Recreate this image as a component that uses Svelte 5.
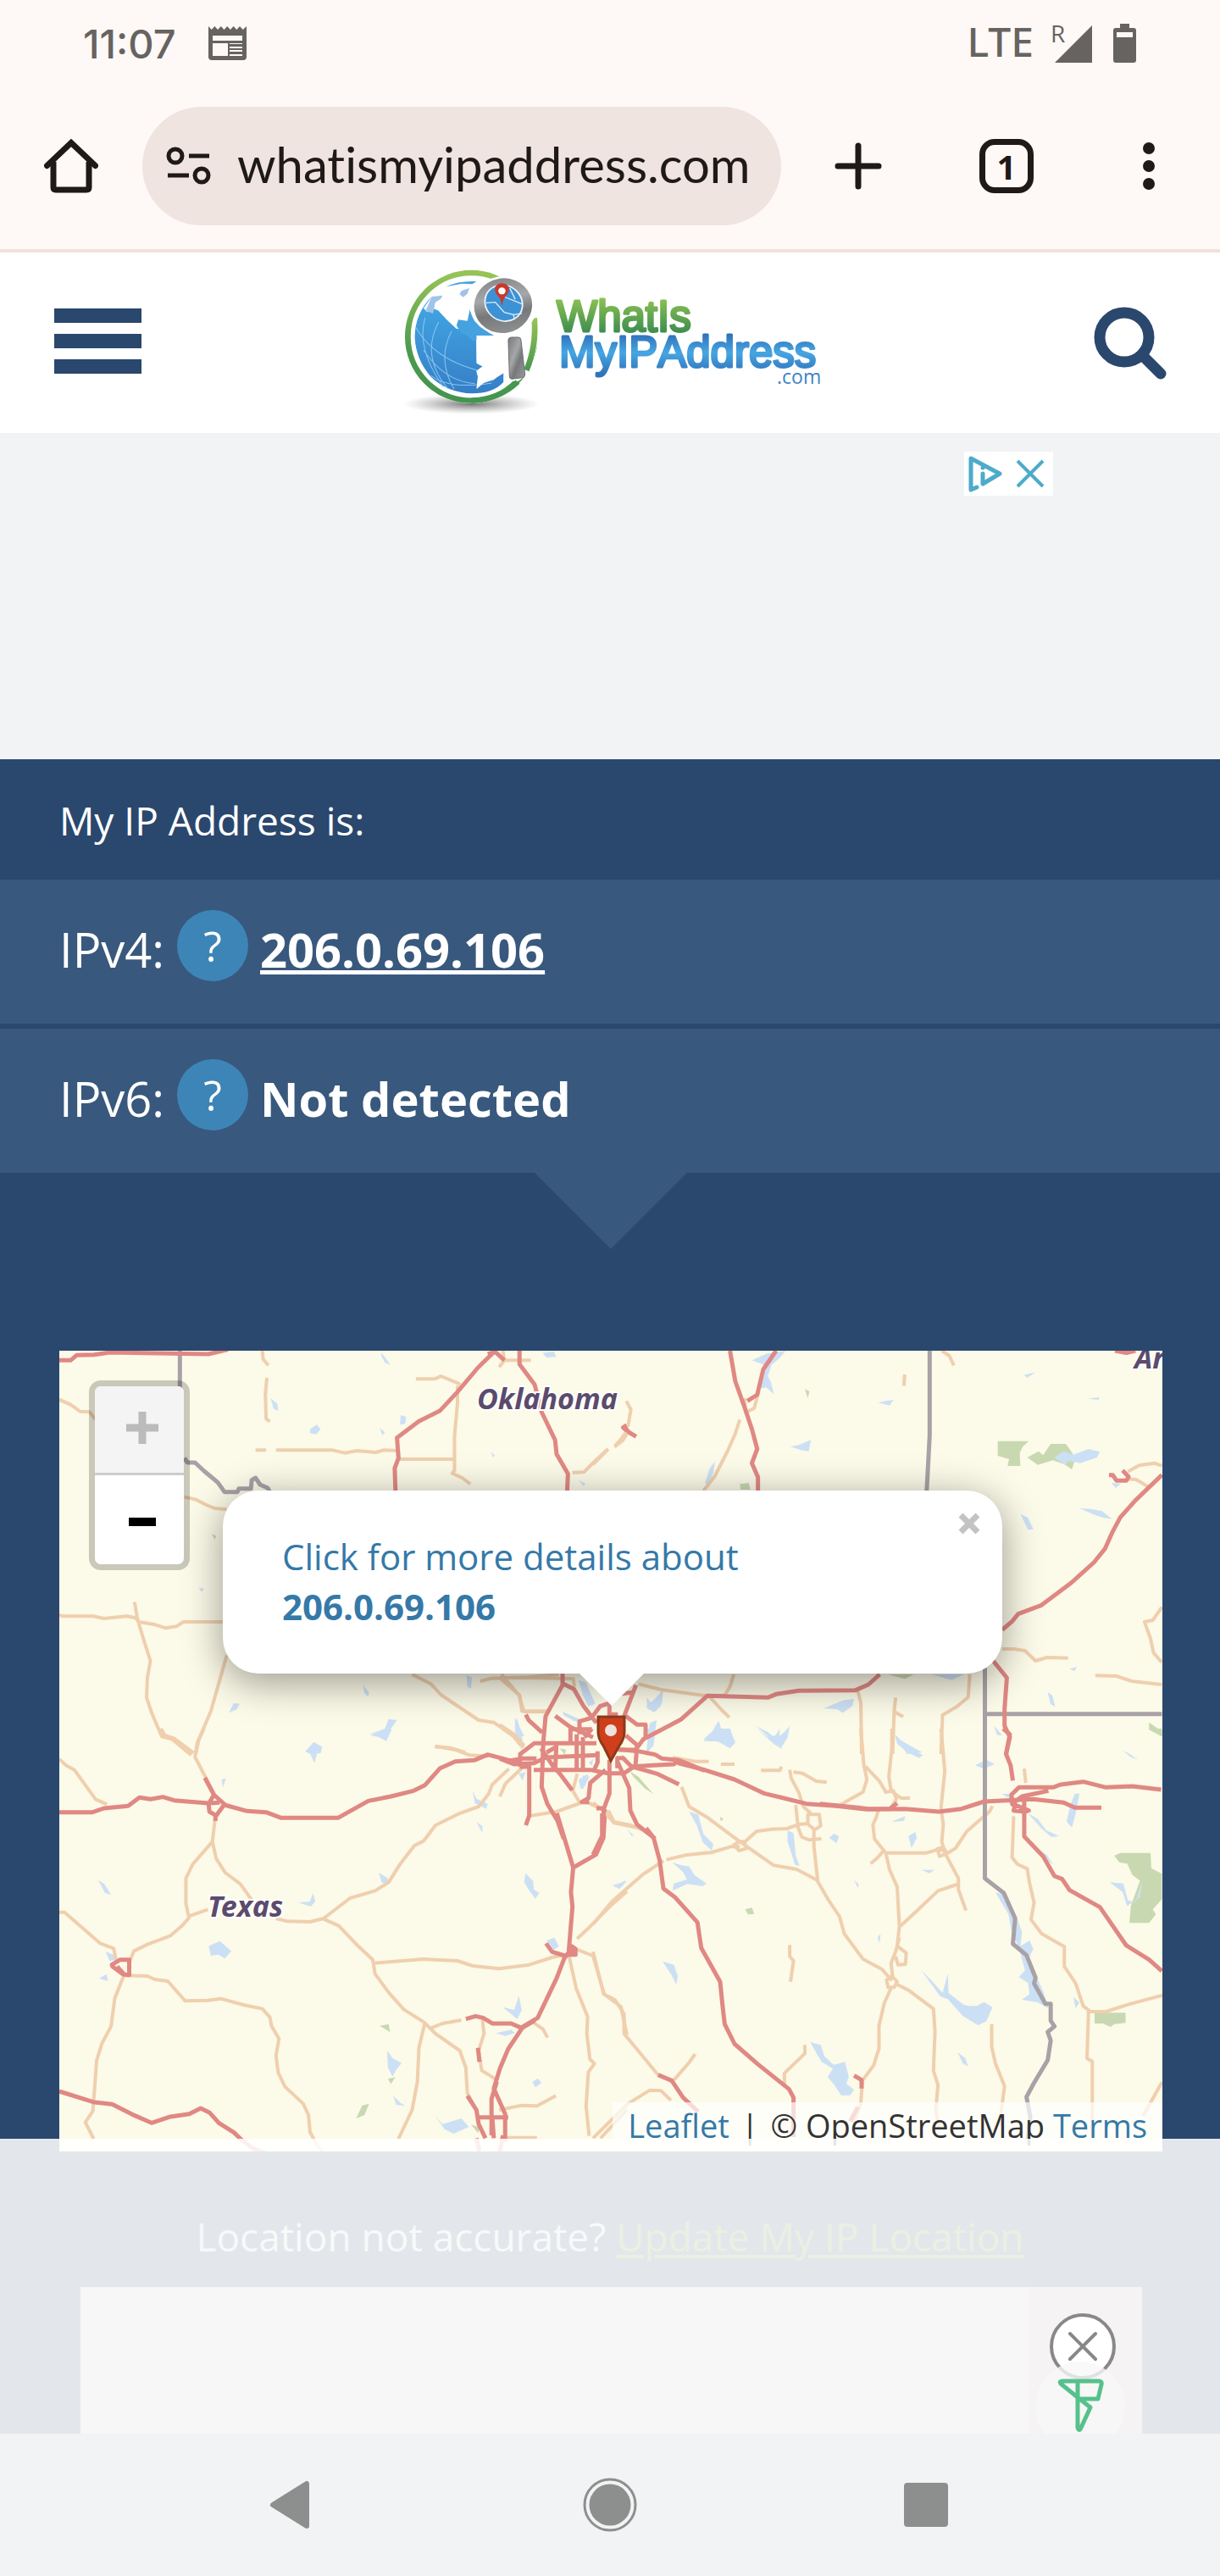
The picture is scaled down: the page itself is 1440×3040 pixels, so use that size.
<script>
  const ip = '206.0.69.106';

  // Map artwork, one entry per area; every area has its own drawing grid.
  const areas = [
    {
      place: 'translate(-30 -24) scale(.44643 .33333)',
      water: ['M918 78l12 20 12 24-14-8-8-20z', 'M626 240l18 20 2 24-12-6z', 'M730 350l18-16 10 16-12 18-16-4z', 'M970 300l14 6-2 24-14 4z', 'M914 346l14 14-6 12z', 'M1440 530l18 12-4 10z', 'M1208 430l10 12-4 8z', 'M1345 80l30-6 6 20-26 2z', 'M1144 1222l14 6-2 40-10-6z', 'M870 1256l16 24-2 18-10-14z', 'M516 1354l12-34 16 2-8 20z', 'M888 1430l40-20 10-34 22 4-18 34-10 32-12-16z', 'M718 1490l22-32 22 16-4 24h-30z', 'M1272 1370l8 20 12 60-8 20-12-50z', 'M1440 1240l20 10 24 70-10 10-22-40z', 'M436 912l14 2-6 12z', 'M1398 1354l36 22-6 8z'],
      green: ['M470 720l12 8-4 12z'],
      tan: ['M67 245l30 18 25 24 25 2 15 25', 'M398 590l28 8 30 20 22 12 32 4', 'M604 72l2 30 14 22M616 168l-4 60 2 85 10 10', 'M586 424h28M640 424h150l32 10 32-8 50 6 20-8 40 2', 'M966 456h146v-80l8-120v-60', 'M1010 172h50l16-10 40 22 12 8', 'M1112 456v40l-6 10 26 16 22 22', 'M1424 504l30-2 30-40 32-40M1535 412l22-22 11-24', 'M1240 72l4 34h70M1244 106l-14 24', 'M67 1008l10 4h80l28 8 60-8 24 6 8 14 44 10 28 12 28-6 18-16h104', 'M266 962l8 60 16 72 18 76-8 60-2 70 14 56 26 82 28 10 50 56', 'M510 1150l-14 66-28 132-32 100-8 52', 'M1000 1218l50 34 26 38 100 90 40 8 50 46 22 36', 'M1180 1242l30-10 98-4 80-10M1236 1218l46 72 14 60h56', 'M1060 1474l40 4 40 16'],
      red: ['M67 106h30l16-18 46-2 42-8 260 6 52-16', 'M1220 72l-46 60-54 86-46 66-56 38-58 58 4 72-10 36 2 80', 'M1284 72v48l40 72 18 96 36 100 4 50 30 70-2 60', 'M1200 84l20-8 24 30', 'M1568 336l-10 8 10 12'],
      border: ['M386 72v138', 'M398 452l8 16h20l24 30 36 40 18 34h34l4-12h32l2-30 10-8 12 24 20 12 6 14'],
    },
    {
      place: 'translate(630 -24) scale(.44643 .33333)',
      water: ['M420 106l40-24 50-10-20 30-18 20-10 40 8 20 8 44-20-24-18 4 2-50 10-34z', 'M522 412l22-6 32-18-6 40-20-4z', 'M754 256l20-6 20-4-10 20z', 'M1140 158l30-10-22 20z', 'M1310 242l30-6-4 10z', 'M1220 450l24-22 26 12 40-20 30 10-8 20-44 20-32-8-8 14z', 'M1286 630l30 2 30 8 26 28-20-4-20-8z', 'M1130 650l20 14 14 40-14 2z', 'M296 540l12-50 14-26-4 40-12 44z', 'M140 1332l24-28 20-30-2 46-22 32z', 'M610 1338l50-28 30-6-4 26-26 24-14-12z', 'M292 1448l24-30 16-36 8 34 20 10 16 28-18 22-30-22z', 'M432 1402l30 20 22 24 20-22 16-22-6 40-18 38-20-26z', 'M896 1218h84l-32 20z', 'M1202 1280l12 12 8 40-12-8z', 'M800 1440l30 24 40 30-40 6z', 'M1060 1400l22 34-14-2z', 'M150 1390l18-10-8 90-20 30z', 'M1370 540l26 2-14 16z', 'M1260 1198l20-6-8 14z'],
      green: ['M1070 392h82l-16 20-8 22 2 46h-34l4-24-30-12z', 'M1148 450l30-22 12 14 20-40h40l16 30 8 26-8 34-20-18-30-14-40 16z', 'M388 544l24-4 4 24h-26z', 'M780 1218h68l-24 16z', 'M560 208l12 8-4 24z', 'M1470 1388l34 32v18l-34-24z'],
      tan: ['M88 250l12 30-8 62M86 362l-10 20-18 28M40 420L0 474', 'M388 316l-12 50-20 60-34 90-30 52', 'M400 240l4 50 22-14 12-60', 'M824 156l-2 40', 'M922 72l20 18 12 34', 'M1414 500l30-22 40-8 20 10M1412 526l24 2 32 26', 'M1082 1128h30l30 6 28 36 30-12 56 2', 'M1328 1222l56 2 40 18 80 12', 'M1504 980l-24 46-22 6 16 60 8 50 22 34', 'M120 1252l60 20 110 20M372 1218l-10 44-14 30-60 0', 'M310 1300l30 44 20 26', 'M700 1276l8 44 2 180', 'M800 1300l-4 50 24 18M796 1350l-4 150', 'M996 1218l-4 80-30 34-38 30-4 138'],
      red: ['M362 72l14 108 24 90 20 80 14 70-14 50 16 50v50', 'M484 72l-34 66-16 90-26 22', 'M80 336l14 24 20 16', 'M1504 512l-70 90-40 60-20 50-20 60-30 50-60 72-80 80-60 30-16 26-26 30', 'M1058 1170l36 60-6 110v60l14 40-10 60', 'M132 1448l100-70 70-84 160 6 22-12 60-12 150-2 34-20 30-36', 'M1364 512h10l10 20h26l6-14-16-22', 'M1380 72l30 8 24-8'],
      border: ['M890 72v300l-8 200', 'M1036 1190v310M1036 1358h468'],
    },
    {
      place: 'translate(-30 446) scale(.44643 .33333)',
      water: ['M718 82l22-34 22 24-12 10-8 40-12-34z', 'M890 24l46-24 10 4-14 40-20-14z', 'M496 180l12-4-8 32z', 'M170 536l16 14 18 38-16-6z', 'M462 770l30-18 30 36-18 26-16-14-20 4z', 'M700 616l30-4 8-30 6 30-12 18z', 'M912 510l22 18 6 20-20-2z', 'M934 1140l14 26 24 18-14 24-10 24-12-32z', 'M1160 220l10 28 30 18-4 18-30-20z', 'M1170 330l16 16v24z', 'M1300 512l20 28 2 30 14 12-10 20-16-28-14-30z', 'M1240 986l30 10 12-50 8 50-12 32z', 'M1222 1078l40-12 10 12-26 10z', 'M1318 1252l14-14 10 16-16 16z', 'M1060 1370l20 30 50-20 20 30-40 24-24-16z', 'M950 1300l20 26 12 10-24-4z', 'M172 884l20-14 4 24z', 'M190 790l20 10 6 20-16 2z', 'M1356 750l20-10 12 30-14 14z', 'M1530 554l38-14-20 28z', 'M1440 180l26-20-8 40-14 4z', 'M1276 0l16 22-10 6z'],
      green: ['M852 1380l16-46 18-6-12 40z', 'M914 1052l24-6 4 28z', 'M1156 1402l24 10-6 20z', 'M936 1240l20-6-12 24z'],
      tan: ['M67 108l18 22 22 16 56 104 30 18', 'M336 0l10 24 24 10 52 52M450 0l-18 50-6 50 50 130', 'M480 310l-8 90-52 80-18 50v90l8 50-20 30-30 34-60 30-36 24-12 40', 'M472 400l10 60 24 50 40 40 32 60', 'M410 664l50-24M640 672l30 10 60 2 36-12 70-72 66-26 36-30 28-60 40-70 24-16 32-56 60-40 54-26 26-44 10-34 44-56', 'M766 674l40 24 50 70 40 50 6 50 36 66 40 60 54 46 30 40 64 60 16 60 4 90 20 50', 'M900 830l130-14 90 6 40 18 70 10 80-14 60-26 30-8', 'M67 650h14l60 70 34 40 36 18 6 40', 'M240 874l60 2 20 12 34 6 46 70 60-2 34-6 60 22 50 14 20 30 4 30 20 46-8 60 6 60 18 50 48 60 14 40 4 60 20 50 20 30', 'M238 874l-24 80-10 100-24 60-14 60-10 180-20 40 22 58', 'M1034 1040l-16 90-4 120-14 100-36 102', 'M1050 1060l30-16 50-12', 'M1186 1030l4 50-14 60 8 70 36 30', 'M1230 1350l60-16 40 2 50-36M1250 1448h80', 'M1240 0l34 32 20 34M1062 62l50 12 40 20 50 4', 'M1568 576l-44 52-56 76-32 40M1424 776l54 28 30 136 44 44 16 100', 'M1414 800l20 120 30 100-2 60 8 90 12 16-16 30-6 120 8 106', 'M1320 1040l26 24 12 30', 'M1568 1350l-70 100'],
      red: ['M67 296h88l30-14 64-8 30-30 30 6 32-8 30 12 90 10 30-2', 'M462 266l14-32 28 34-22 40-18-14zM480 305v22M476 234l-24-60', 'M504 270l60 22 50 4 40 20h150l80-60 60-16 60-20 30-20 40-60 40-24 50-4 36-20 90 32', 'M1142 1028l26-10 20 6 24 20h50l28 16 34-26', 'M1416 790l-14 24-20 70-50 140-38 30-40 80-22 70-16 70 30 90v100', 'M1224 1250l-14 60v130M1174 1376h80M1146 1300l24 50 6 50 18 50M1212 1376l4 74', 'M1174 1130l4 50', 'M67 1284l90 38 50 8 60 40 44 26 50-22 50-10 30-20 24 16 24 36 40 34 20 26 30 30 40 20', 'M206 836l22-18h24v54l-16-2-28-28z', 'M1354 760l16 30 34 14 18-14v-20l10 10v20h-24', 'M1426 490l-6 90 4 50-10 160M1382 296l44 196 60-46 20-60 4-100', 'M240 872l-20-30', 'M1170 1450l8 46M1240 1440l-8 60'],
      border: [],
    },
    {
      place: 'translate(630 446) scale(.44643 .33333)',
      water: ['M254 294l24 10 14 70 26 34-4 24-24-30-16-60z', 'M514 360l16 10 6 80 10 36-12-4-20-84z', 'M210 474l24 10 20 4 14 30 32 30-10 10-40-8-40 24 4-26 34-14-10-26z', 'M184 824l30 12 10 40-4 30-12-32z', 'M432 0l30 30 20-6 12-24-2 40 8 32-20-16z', 'M292 44l26-26 4-18h40l14 50-14 20-28-24z', 'M798 20l30 40 44 34-10 10-30-20-28-30z', 'M1010 130l30-20 22 16-30 16z', 'M868 856l30 40 26 40 14-70 2 70 44 46 30 0 20-14 22 18-16 50-22 14-40-32-40-60-20-10z', 'M574 1110l28 10 10 40 24 30 30-10 10 52-6 26 20 20-10 20h-24l-20-40-16-24 14-30-30-24z', 'M964 1146l20 20 8 30-14-10z', 'M1064 580l30 10 24 70 16 60-4 50 24-20 10 30-14 40 20 50 20 60 14 60-30-22-40-8 20-20-4-40-24-20 16-24-16-80-20-60-8-60z', 'M1274 230h12l-10 70-10 50-14-20 10-60z', 'M1150 300l26 20 22 40 34 20-20 4-26-30z', 'M1180 430l20 18 14 28 10 6-14-6z', 'M1366 544l36 4 12 60 20 6 18-76-6 60-34 30-12-50z', 'M1400 76l22 16 18 18-20-10z', 'M834 380l18-14 4 20-14 36z', 'M868 500h34l-12 12z', 'M788 330l38-20-4 16z', 'M624 386l14-14 12 10-6 24z', 'M56 560l30-24-10 24z', 'M752 740l8-14-2 34z', 'M1270 950l16 20-10 20z', 'M1080 230l30 2-8 16z', 'M140 0h20l-6 60z', 'M690 536l12 14-2 14z'],
      green: ['M1378 450l16-10h80l2 54 28 20v90l-24 36 8 18-18 30h-52l4-60 24-90-20-20-14-40-20-4z', 'M1326 1006h82v36l-30 4-10 10-20-12h-22z', 'M402 640l18-6 6 22-16 2z', 'M1468 0h36v28z', 'M96 150l24 20 38 60-26-30z', 'M974 976l30 10 10 40-20-10z'],
      tan: ['M234 206l20 70 50 40 84 84 90 84 60 14 54 38 30 70 30 60 12 60 50 90 50 36 26 40', 'M194 464l50-16 70-10 50-20h24M388 400h12l6 24-20 8-14-20zM402 400l30-36 40-8 40-2 30-14 24-4', 'M520 146l4 30 20 50 12 50 20 24M568 304h30l4 40-16 14-18-20zM584 358v60l10 120', 'M536 270l6 80 10 34 20 10 32-4', 'M530 154l24 4 36 28 28 4M444 148h50l4-14M338 126h36M210 102l60 14h36', 'M708 0l8 130 8 50-10 44-40 30-30 24M720 134l36 50 18 40', 'M790 0v70l-8 100 6 50M770 226l24-6 8 30-14 30M788 220l26 26h24', 'M920 0l10 150-10 130 6 60-4 60 8 40', 'M756 280l-6 30-10 30 4 50 30 50 10 60 20 60 6 140-6 70 24 24-2 40-20 2-6-30', 'M772 440h110l24-10h24M910 426l16-6 10 22-20 10z', 'M770 430l-20 30-16 18M930 440l36 90v40l20 74M938 440l20-16 30-60 60-70 8-20M812 700l40-50 60-76 50-22', 'M810 740l-10 50-12 40 4 50M776 890l14-14 14 20-8 20h-16zM790 912l-20 60-14 80v80l-14 60-30 54-4 80-20 70', 'M804 906l30 20 66 66 4 80-4 140 12 50-6 90 8 60', 'M0 692l50-80 80-94 56-50', 'M0 790l28 150 30 20 24 50v70l90 146', 'M270 1152l-16 30-40 62M0 1450l90-120 60-50 30 2 26 34', 'M560 1120v30l-54 70v40', 'M520 766v40l10 16-8 74', 'M1140 142l4 50M1112 310l-4 146 14 24 26 16 6 50 12 70-8 60 28 50 60 46v70l30 60 20 80 20 20h40l60-26 90-32', 'M1310 998l-4 170 14 10v274', 'M1054 1046v80l10 60 24 80-14 140', 'M1504 1252l-50 120M0 262l26 28 30 44 60 16'],
      red: ['M224 122l70 24 80 34 80 50 50 16 60 20 80 8 80 12 100-2 90 10 60-10 60-26 130-8 80 12 30 18h70', 'M600 266l130 18h54l20-20', 'M1110 274l-4-40 20-26h90l20-10 60-10 60 20 70-4 76 12M1104 270l30-30 70-20M1112 290l30 4 10-4-36-20z', 'M1084 0l18 20-10 70 12 40 6 54', 'M1140 240v142l50 70 30 70 20 10 20 40 80 60 70 136 60 50 34 40', 'M140 352l20 34 16 80 10 100 30 30 60 90 10 90 50 120 6 80 6 70 26 70 60 70 84 90 12 30v140', 'M172 1226l36 20 30 60 40 50', 'M24 300v80l-24 66', 'M690 1228l20 16v30M700 1340l-20 50'],
      border: ['M1036 0v530l50 52 30 90-6 90 36 40 24 80-4 20 30 72h14v60l10 20-18 20 8 30-8 70-36 80-20 50 10 70-8 98'],
    },
    {
      place: 'translate(520 376) scale(.33333)',
      water: ['M280 40l24 6 30 70-20 16-20-40z', 'M222 150l60 26-4 12-50-24z', 'M60 170l8 30 18 36-22 6z', 'M520 100l20 24 20-10 20-44-10 60-20 20-28-10z', 'M284 420l10-44 24 4-24 44z', 'M66 370l26-6-12 30z', 'M316 330l14-12-4 24z', 'M74 260l14 12-14 14z', 'M450 565l26 26-10-2z'],
      green: ['M460 362l40 36 44 44-30-20-40-40z', 'M212 280l22 4-4 18z', 'M430 300l20 14-6 10z', 'M780 522l12 8-10 8z'],
      tan: ['M0 196l50 34 36 40M0 450l20-46 60-56', 'M0 30l70 62 8 56h90M0 30h110l150 4 4 28', 'M110 518l90-14 84-30-26-44 16-60M300 466l50 24', 'M384 500l20 40 60 12 40 16'],
      red: ['M222 16v40l-60 110-8 90-6 160 20 60 36 60 22 64', 'M222 50l40 20 34 60 46 60M92 160l10 20 48 44', 'M196 165l54 40 80 36M250 262v-50h76M282 230v-46l50-14M300 240l26-30', 'M0 316l50 20 70-4 44-20 180-8M20 326l60-10h50', 'M72 346v-46l50-38h220M146 280l50 74 4-80-34 20', 'M70 345h40M104 340v100v78l-12 34', 'M120 356h200l60 12h60l36-24', 'M186 340l30 34 40 54', 'M272 230v124M294 240v110M346 290v40l-12 26', 'M330 164l26-34 32-10v44M388 160h30', 'M374 356l-54 46-6 54-24 14h26', 'M388 320v120l-20 54-4 106M342 492h30', 'M418 330l40 90 4 80 24 50 64 50', 'M416 350v-36h20l30 30 150-8 16-12', 'M446 234l40 34-6 76M446 166l40 30h30v46', 'M482 56l-42 110M430 86l40-4', 'M420 285h60l30-40', 'M410 282l80 8 60 12 24 14 60 6 90 36', 'M470 345l90 26 74 36'],
      border: [],
    },
  ];

  const labels = [
    { name: 'Oklahoma', x: 493, y: 69 },
    { name: 'Texas', x: 175, y: 668 },
    { name: 'Ar', x: 1269, y: 21 },
  ];
</script>

<div class="screen">
  <div class="status">
    <time>11:07</time>
    <svg class="news" viewBox="0 0 45 40" width="45" height="40" aria-hidden="true">
      <path fill="#676361" fill-rule="evenodd" d="M0 0l3.700 4 3.700-4 3.700 4 3.700-4 3.700 4 3.700-4 3.700 4 3.700-4 3.700 4 3.700-4 3.700 4L45 0v36q0 4-4 4H4q-4 0-4-4zM5 11v6h35v-6zm0 9v15h18V20zm20 0v1h15v-1zm0 4v2h15v-2zm0 4v2h15v-2zm0 5v2h15v-2z" />
    </svg>
    <span class="spacer"></span>
    <span class="lte">LTE</span>
    <svg viewBox="0 0 52 48" width="52" height="48" aria-hidden="true">
      <text x="0" y="23" class="roam">R</text>
      <path fill="#676361" d="M5 47L49 3v44z" />
    </svg>
    <svg class="battery" viewBox="0 0 28 46" width="28" height="46" aria-hidden="true">
      <path fill="#676361" fill-rule="evenodd" d="M8 0h11v5h5q3 0 3 3v35q0 3-3 3H3q-3 0-3-3V8q0-3 3-3h5zM4 10v6h19v-6z" />
    </svg>
  </div>

  <div class="toolbar">
    <button class="home" aria-label="Home">
      <svg viewBox="0 0 64 64" width="64" height="64" fill="none" stroke="#1f1a17" stroke-width="7">
        <path stroke-linejoin="round" d="M11 27v30q0 3 3 3h36q3 0 3-3V27" />
        <path stroke-linecap="round" d="M3.500 31.500L32 4.500l28.500 27" />
      </svg>
    </button>
    <button class="omnibox">
      <svg viewBox="0 0 54 46" width="54" height="46" fill="none" stroke="#1f1a17" stroke-width="5">
        <circle cx="11" cy="11" r="8" /><path d="M27 11h24M2 34h25" /><circle cx="42" cy="34" r="8" />
      </svg>
      <span>whatismyipaddress.com</span>
    </button>
    <div class="actions">
      <button aria-label="New tab">
        <svg viewBox="0 0 56 56" width="56" height="56"><path stroke="#1f1a17" stroke-width="7" stroke-linecap="round" d="M28 4v48M4 28h48" /></svg>
      </button>
      <button class="tabs" aria-label="Open tabs"><span>1</span></button>
      <button aria-label="More options">
        <svg viewBox="0 0 14 56" width="14" height="56" fill="#1f1a17"><circle cx="7" cy="7" r="7" /><circle cx="7" cy="28" r="7" /><circle cx="7" cy="49" r="7" /></svg>
      </button>
    </div>
  </div>

  <header>
    <button class="menu" aria-label="Menu"><i></i><i></i><i></i></button>
    <a class="logo" href="/" aria-label="WhatIsMyIPAddress.com">
      <svg viewBox="0 0 500 190" width="500" height="190">
        <defs>
          <linearGradient id="ring" x1="0" y1="0" x2="0" y2="1"><stop offset="0" stop-color="#97c457" /><stop offset=".6" stop-color="#4c9b4d" /><stop offset="1" stop-color="#43944f" /></linearGradient>
          <linearGradient id="ocean" x1="0" y1="0" x2="0" y2="1"><stop offset="0" stop-color="#42a8e4" /><stop offset="1" stop-color="#367ec7" /></linearGradient>
          <linearGradient id="steel" x1="0" y1="0" x2="1" y2="1"><stop offset="0" stop-color="#77797c" /><stop offset=".4" stop-color="#a5a7a9" /><stop offset=".6" stop-color="#76787a" /><stop offset="1" stop-color="#9b9c9e" /></linearGradient>
          <linearGradient id="leaf" gradientUnits="userSpaceOnUse" x1="0" y1="42" x2="0" y2="83"><stop offset="0" stop-color="#8cc152" /><stop offset="1" stop-color="#3c8d4f" /></linearGradient>
          <linearGradient id="sky" gradientUnits="userSpaceOnUse" x1="0" y1="85" x2="0" y2="132"><stop offset="0" stop-color="#3072bb" /><stop offset=".45" stop-color="#46a6e2" /><stop offset="1" stop-color="#3071b9" /></linearGradient>
          <radialGradient id="shade"><stop offset="0" stop-color="#666" stop-opacity=".9" /><stop offset="1" stop-color="#999" stop-opacity="0" /></radialGradient>
        </defs>
        <g transform="translate(-30 -20) scale(.35714 .33333)">
          <ellipse cx="323" cy="560" rx="225" ry="36" fill="url(#shade)" />
          <ellipse cx="323" cy="322" rx="219" ry="236" fill="#fff" />
          <ellipse cx="323" cy="322" rx="210" ry="226" fill="none" stroke="url(#ring)" stroke-width="19" />
          <path fill="#fff" d="M412 76l150 50v120l-40 200-46 35-50-5z" />
          <path fill="none" stroke="url(#ring)" stroke-width="19" d="M531 256q8 100-26 185M476 482q-60 62-153 66" />
          <path fill="url(#ocean)" d="M192 180q-56 60-56 145 4 80 54 140 56 56 135 58 70 0 104-40v-38l-32 30-36 10-20 22 6-34-8-30 26-20-24-16-2-80-20-24-46-10-30-30-30-34-20-8-16 14-12-14 16-24z" />
          <path fill="#45a2df" d="M318 226l-8 40-30-4-6 20 14 26 20 10 20 20 24-10 76 8-50-30-24-30-20-8zM240 145q40-22 100-19l-14 10-34-2z" />
          <path fill="#9fc4ea" d="M192 180l36-4-6 12-18 12-8 40-24-10zM290 160l26-10-6 20-14 12-12-10z" />
          <path fill="none" stroke="#85c5ee" stroke-width="3" d="M170 255q-30 110 60 244M215 270q-60 120 30 236M258 302q-50 100 8 206M140 290q60 110 200 150M165 370q70 110 170 118M190 460q60 50 200 26" />
          <path fill="#fff" d="M340 318l60 0 28 14 22 100-24 22-32 20-30 12-24 20 4-40 20-36-24-14z" />
          <ellipse cx="430" cy="212" rx="112" ry="104" fill="#fff" />
          <ellipse cx="428" cy="212" rx="95" ry="98" transform="rotate(35 428 212)" fill="url(#steel)" />
          <ellipse cx="430" cy="203" rx="60" ry="66" transform="rotate(-35 430 203)" fill="#3d92d5" stroke="#eef5fb" stroke-width="5" />
          <path fill="none" stroke="#d9ecf8" stroke-width="4" d="M372 202l30-2 30 36 30 8 4 18M430 180l60 26M462 244l28-4M450 150l18 40" />
          <path fill="#c8382b" d="M424 213q-4-30-19-42-14-34 19-38 34 4 19 38-15 12-19 42z" /><circle cx="424" cy="160" r="12" fill="#fff" />
          <path fill="url(#steel)" stroke="#707275" stroke-width="3" d="M445 334q2-10 12-10h20q8 0 10 10l13 120q0 12-10 13l-32 5q-8 0-9-10z" />
        </g>
        <text class="brand" x="186" y="81" fill="url(#leaf)" stroke="url(#leaf)">WhatIs</text>
        <text class="brand" x="189" y="123" fill="url(#sky)" stroke="url(#sky)">MyIPAddress</text>
        <text class="dotcom" x="446" y="143">.com</text>
      </svg>
    </a>
    <button class="search" aria-label="Search">
      <svg viewBox="0 0 86 86" width="86" height="86" fill="none" stroke="#2a476e" stroke-width="13"><circle cx="36" cy="36" r="29" /><path stroke-linecap="round" d="M57 57l22 22" /></svg>
    </button>
  </header>

  <aside class="ad-top">
    <div class="adchoice">
      <button aria-label="Ad information">
        <svg viewBox="0 0 42 44" width="42" height="44" fill="none" stroke="#4dabca" stroke-width="5" stroke-linecap="round" stroke-linejoin="round"><path d="M11 38l-7 3V4l34 18-20 12V22" /><circle cx="18" cy="15" r="2.500" fill="#4dabca" stroke="none" /></svg>
      </button>
      <button aria-label="Close ad">
        <svg viewBox="0 0 34 34" width="34" height="34" stroke="#4dabca" stroke-width="4"><path d="M2 2l30 30M32 2L2 32" /></svg>
      </button>
    </div>
  </aside>

  <main>
    <h1>My IP Address is:</h1>
    <div class="row"><span>IPv4:</span><button aria-label="About IPv4">?</button><a href="/ip">{ip}</a></div>
    <div class="row last"><span>IPv6:</span><button aria-label="About IPv6">?</button><strong>Not detected</strong></div>

    <div class="map">
      <svg class="tiles" viewBox="0 0 1302 945" aria-hidden="true">
        <rect width="1302" height="945" fill="#fcfae8" />
        {#each areas as area}
          <g transform={area.place}>
            {#each area.green as d}<path class="green" {d} />{/each}
            {#each area.water as d}<path class="water" {d} />{/each}
          </g>
        {/each}
        {#each areas as area}
          <g transform={area.place}>
            {#each area.tan as d}<path class="line tan" {d} />{/each}
            {#each area.border as d}<path class="line border" {d} />{/each}
            {#each area.red as d}<path class="line red" {d} />{/each}
          </g>
        {/each}
        {#each labels as l}<text class="place" x={l.x} y={l.y}>{l.name}</text>{/each}
        <path fill="#cf3f1c" stroke="#8a3a1a" stroke-width="3" d="M636 432h31v18q0 8-6 16l-10 18-9-18q-6-8-6-16z" />
        <circle cx="651" cy="448" r="7" fill="#eee2df" />
      </svg>

      <div class="zoom">
        <button class="in" aria-label="Zoom in" disabled><svg viewBox="0 0 38 38" width="38" height="38"><path stroke="#bbb" stroke-width="9" d="M19 0v38M0 19h38" /></svg></button>
        <button aria-label="Zoom out"><svg viewBox="0 0 38 38" width="38" height="38"><path stroke="#000" stroke-width="10" d="M3 23h32" /></svg></button>
      </div>

      <div class="popup">
        <a href="/details">Click for more details about<br /><b>{ip}</b></a>
        <button aria-label="Close popup"><svg viewBox="0 0 26 26" width="26" height="26"><path stroke="#c3c3c3" stroke-width="7" d="M3 3l20 20M23 3L3 23" /></svg></button>
      </div>

      <div class="credit"><a href="/leaflet">Leaflet</a> <i>|</i> © OpenStreetMap <a href="/terms">Terms</a></div>
    </div>

    <div class="veil">
      <p>Location not accurate? <a href="/update">Update My IP Location</a></p>
      <aside class="ad-bottom">
        <div class="ad-side">
          <button aria-label="Close advertisement">
            <svg viewBox="0 0 80 80" width="80" height="80" stroke="#888" stroke-width="4" stroke-linecap="round"><circle cx="40" cy="40" r="37" fill="#fff" /><path d="M25 25l30 30M55 25L25 55" /></svg>
          </button>
          <svg class="sponsor" viewBox="0 0 106 86" width="106" height="86" aria-hidden="true">
            <circle cx="53" cy="53" r="53" fill="#f7f7f7" fill-opacity=".8" />
            <path fill="none" stroke="#57c08c" stroke-width="5" stroke-linejoin="round" d="M50 24v54q2 5 4 0l11-24-14-11-21-17q-2-3 2-3h43q4 0 3 4l-4 17H51" />
          </svg>
        </div>
      </aside>
    </div>
  </main>

  <nav>
    <button aria-label="Back"><svg viewBox="0 0 64 64" width="64" height="64"><path fill="#8d8f8e" stroke="#8d8f8e" stroke-width="6" stroke-linejoin="round" d="M7 32l40-25v50z" /></svg></button>
    <button aria-label="Home screen"><svg viewBox="0 0 64 64" width="64" height="64"><circle cx="32" cy="32" r="30" fill="none" stroke="#8d8f8e" stroke-width="3" /><circle cx="32" cy="32" r="24.500" fill="#8d8f8e" /></svg></button>
    <button aria-label="Recent apps"><svg viewBox="0 0 64 64" width="64" height="64"><rect x="6" y="6" width="52" height="52" rx="4" fill="#8d8f8e" /></svg></button>
  </nav>
</div>

<style>
  :global(body) { margin: 0; }
  .screen { font-family: "Open Sans", "Noto Sans", sans-serif; background: #f1f3f4; overflow: hidden; }
  button { border: 0; padding: 0; margin: 0; background: none; font: inherit; color: inherit; display: flex; align-items: center; justify-content: center; }
  svg { display: block; }

  .status { display: flex; align-items: center; height: 102px; padding: 0 98px 0 98px; background: #fef9f6; color: #676361; font-size: 48px; }
  time { font: 500 47px Inter, sans-serif; }
  .news { margin-left: 38px; }
  .spacer { flex: 1; }
  .lte { font-family: "Noto Sans", sans-serif; font-weight: 500; line-height: 64px; padding-bottom: 4px; margin-right: 20px; }
  .roam { font: 28px "Open Sans", sans-serif; fill: #676361; }
  .battery { margin-left: 22px; }

  .toolbar { display: flex; align-items: center; height: 192px; padding-left: 52px; background: #fef9f6; border-bottom: 4px solid #f3e0da; box-sizing: content-box; }
  .omnibox { flex: 1; height: 140px; margin: 0 0 4px 52px; border-radius: 70px; padding: 0 28px; gap: 30px; justify-content: flex-start; background: #efe4e0; color: #1f1a17; font: 58px Lato, sans-serif; font-variant-ligatures: none; }
  .omnibox span { padding-bottom: 6px; }
  .home, .actions { margin-bottom: 4px; }
  .actions { display: grid; grid-template-columns: 182px 168px 168px; justify-items: center; align-items: center; }
  .tabs { width: 64px; height: 64px; box-sizing: border-box; border: 7px solid #1f1a17; border-radius: 18px; color: #1f1a17; font: bold 40px "Noto Sans", sans-serif; }

  header { display: grid; grid-template-columns: 1fr auto 1fr; align-items: center; height: 213px; padding: 0 63px 0 64px; background: #fff; }
  .menu { flex-direction: column; gap: 13px; width: 103px; padding-bottom: 4px; }
  .menu i { width: 100%; height: 17px; background: #2a476e; }
  .search { justify-self: end; }
  .brand { font: 51px "Liberation Sans", Arial, sans-serif; font-kerning: none; stroke-width: 3px; stroke-linejoin: round; }
  .dotcom { font: 23px "Open Sans", sans-serif; fill: #3f83c6; }

  .ad-top { display: flex; justify-content: flex-end; align-items: flex-start; height: 385px; padding-right: 197px; background: #f1f3f5; box-sizing: border-box; }
  .adchoice { display: flex; align-items: center; gap: 15px; margin-top: 22px; height: 52px; padding: 0 10px 0 4px; background: #fff; }

  main { background: #2a476e; color: #fff; }
  h1 { margin: 0; padding: 40px 70px 38px; font-size: 46px; font-weight: 400; line-height: 64px; }
  .row { display: flex; align-items: center; height: 170px; padding: 0 70px; margin-bottom: 6px; background: #38587d; font-size: 56px; }
  .row button { width: 84px; height: 84px; margin: 0 14px 14px 15px; border-radius: 50%; background: #3d85b6; font-size: 50px; line-height: 60px; }
  .row a { color: #fff; font-weight: 700; text-decoration-thickness: 5px; text-underline-offset: 3px; text-decoration-skip-ink: none; }
  .row > span, .row > a, .row > strong { line-height: 76px; padding-bottom: 7px; }
  .last { position: relative; margin-bottom: 210px; }
  .last::after { content: ""; position: absolute; left: 50%; top: 100%; margin-left: -89px; border: 90px solid transparent; border-top-color: #38587d; border-bottom: 0; }

  .map { position: relative; margin: 0 68px 0 70px; overflow: hidden; }
  .tiles { width: 100%; height: auto; }
  .line { fill: none; vector-effect: non-scaling-stroke; stroke-linejoin: round; }
  .tan { stroke: #efcfae; stroke-width: 4px; }
  .red { stroke: #e08883; stroke-width: 5px; }
  .border { stroke: #a8a2a6; stroke-width: 5px; }
  .water { fill: #cce0f5; }
  .green { fill: #c8d9b1; }
  .place { font: italic bold 34px "Noto Sans", sans-serif; fill: #5b4b6c; stroke: #fff; stroke-width: 4px; paint-order: stroke; }

  .zoom { position: absolute; left: 35px; top: 35px; width: 105px; border: 7px solid rgba(0, 0, 0, .2); border-radius: 14px; background: #fff; background-clip: padding-box; overflow: hidden; }
  .zoom button { box-sizing: border-box; width: 100%; height: 105px; padding: 0 0 4px 6px; }
  .zoom .in { background: #f4f4f4; border-bottom: 3px solid #ccc; }

  .popup { position: absolute; left: 193px; right: 189px; top: 165px; padding: 48px 70px 50px; border-radius: 42px; background: #fff; box-shadow: 0 10px 48px rgba(0, 0, 0, .4); }
  .popup::after { content: ""; position: absolute; left: 50%; top: 100%; margin-left: -39px; border: 38px solid transparent; border-top-color: #fff; border-bottom: 0; }
  .popup a { display: block; color: #3579a8; font-size: 42px; line-height: 59px; text-decoration: none; }
  .popup button { position: absolute; right: 26px; top: 26px; }

  .credit { position: absolute; right: 0; bottom: 0; padding: 0 18px 4px; line-height: 54px; font-size: 38px; white-space: nowrap; color: #333; background: rgba(255, 255, 255, .7); }
  .credit a { color: #3579a8; text-decoration: none; }
  .credit i { font-style: normal; margin: 0 4px; }

  .veil { position: relative; margin-top: -15px; background: rgba(255, 255, 255, .87); }
  p { margin: 0; padding: 83px 70px 28px; text-align: center; font-size: 46px; line-height: 64px; color: #f9f9f9; }
  p a { color: #ebf0e2; text-decoration-thickness: 4px; text-underline-offset: 4px; }
  .ad-bottom { display: flex; justify-content: flex-end; height: 173px; margin: 0 92px 0 95px; background: #f7f7f8; overflow: hidden; }
  .ad-side { display: flex; flex-direction: column; align-items: center; width: 133px; padding: 30px 8px 0 0; box-sizing: border-box; background: #f5f3f4; }
  .sponsor { flex: none; margin-top: -22px; margin-right: 6px; }

  nav { display: flex; justify-content: space-between; align-items: center; height: 168px; padding: 0 315px; }
</style>
